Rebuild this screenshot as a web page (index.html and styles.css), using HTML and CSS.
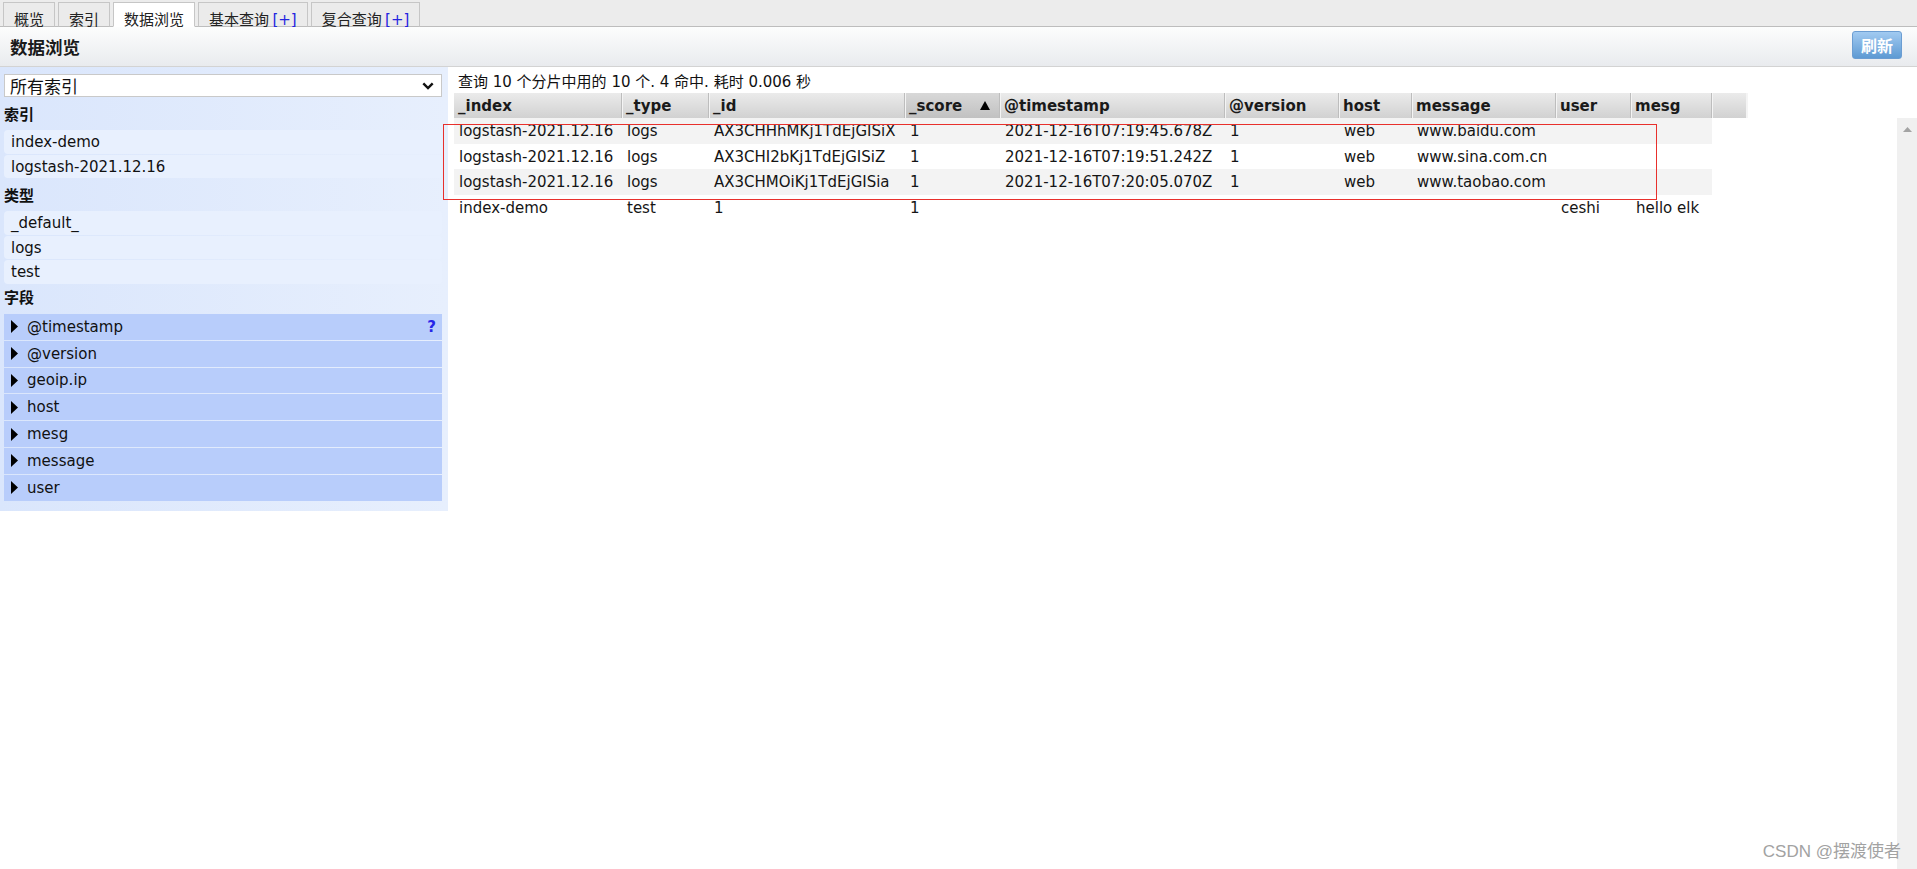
FILE: index.html
```html
<!DOCTYPE html>
<html lang="zh">
<head>
<meta charset="utf-8">
<title>数据浏览</title>
<link rel="stylesheet" href="styles.css">
</head>
<body>
<nav class="tabs">
  <div class="tab">概览</div>
  <div class="tab">索引</div>
  <div class="tab active">数据浏览</div>
  <div class="tab">基本查询 <span class="plus">[+]</span></div>
  <div class="tab">复合查询 <span class="plus">[+]</span></div>
</nav>
<header class="header">
  <h1 class="title">数据浏览</h1>
  <button class="refresh">刷新</button>
</header>
<div class="main">
  <aside class="sidebar">
    <div class="select">
      <span>所有索引</span>
      <svg class="chev" width="12" height="8" viewBox="0 0 12 8"><path d="M1.3 1.3 L6 6 L10.7 1.3" fill="none" stroke="#111" stroke-width="2.4"/></svg>
    </div>
    <div class="sec-title">索引</div>
    <div class="list">
      <div class="item">index-demo</div>
      <div class="item">logstash-2021.12.16</div>
    </div>
    <div class="sec-title">类型</div>
    <div class="list">
      <div class="item">_default_</div>
      <div class="item">logs</div>
      <div class="item">test</div>
    </div>
    <div class="sec-title fields-title">字段</div>
    <div class="fields">
      <div class="field"><svg class="tri" width="7" height="13" viewBox="0 0 7 13"><path d="M0 0 L7 6.5 L0 13 Z" fill="#000"/></svg><span class="fname">@timestamp</span><span class="help">?</span></div>
      <div class="field"><svg class="tri" width="7" height="13" viewBox="0 0 7 13"><path d="M0 0 L7 6.5 L0 13 Z" fill="#000"/></svg><span class="fname">@version</span></div>
      <div class="field"><svg class="tri" width="7" height="13" viewBox="0 0 7 13"><path d="M0 0 L7 6.5 L0 13 Z" fill="#000"/></svg><span class="fname">geoip.ip</span></div>
      <div class="field"><svg class="tri" width="7" height="13" viewBox="0 0 7 13"><path d="M0 0 L7 6.5 L0 13 Z" fill="#000"/></svg><span class="fname">host</span></div>
      <div class="field"><svg class="tri" width="7" height="13" viewBox="0 0 7 13"><path d="M0 0 L7 6.5 L0 13 Z" fill="#000"/></svg><span class="fname">mesg</span></div>
      <div class="field"><svg class="tri" width="7" height="13" viewBox="0 0 7 13"><path d="M0 0 L7 6.5 L0 13 Z" fill="#000"/></svg><span class="fname">message</span></div>
      <div class="field"><svg class="tri" width="7" height="13" viewBox="0 0 7 13"><path d="M0 0 L7 6.5 L0 13 Z" fill="#000"/></svg><span class="fname">user</span></div>
    </div>
  </aside>
  <section class="content">
    <div class="info">查询 10 个分片中用的 10 个. 4 命中. 耗时 0.006 秒</div>
    <table class="grid head">
      <colgroup>
        <col class="c-index"><col class="c-type"><col class="c-id"><col class="c-score"><col class="c-ts"><col class="c-ver"><col class="c-host"><col class="c-msg"><col class="c-user"><col class="c-mesg"><col class="c-pad">
      </colgroup>
      <thead>
        <tr>
          <th>_index</th><th>_type</th><th>_id</th>
          <th class="sorted"><span class="th-flex">_score<svg class="sort" width="10" height="9" viewBox="0 0 10 9"><path d="M5 0 L10 9 L0 9 Z" fill="#000"/></svg></span></th>
          <th>@timestamp</th><th>@version</th><th>host</th><th>message</th><th>user</th><th>mesg</th><th class="pad"></th>
        </tr>
      </thead>
    </table>
    <div class="body-wrap">
      <div class="body-scroll">
        <table class="grid body">
          <colgroup>
            <col class="c-index"><col class="c-type"><col class="c-id"><col class="c-score"><col class="c-ts"><col class="c-ver"><col class="c-host"><col class="c-msg"><col class="c-user"><col class="c-mesg">
          </colgroup>
          <tbody>
            <tr><td>logstash-2021.12.16</td><td>logs</td><td>AX3CHHhMKj1TdEjGISiX</td><td>1</td><td>2021-12-16T07:19:45.678Z</td><td>1</td><td>web</td><td>www.baidu.com</td><td></td><td></td></tr>
            <tr><td>logstash-2021.12.16</td><td>logs</td><td>AX3CHI2bKj1TdEjGISiZ</td><td>1</td><td>2021-12-16T07:19:51.242Z</td><td>1</td><td>web</td><td>www.sina.com.cn</td><td></td><td></td></tr>
            <tr><td>logstash-2021.12.16</td><td>logs</td><td>AX3CHMOiKj1TdEjGISia</td><td>1</td><td>2021-12-16T07:20:05.070Z</td><td>1</td><td>web</td><td>www.taobao.com</td><td></td><td></td></tr>
            <tr><td>index-demo</td><td>test</td><td>1</td><td>1</td><td></td><td></td><td></td><td></td><td>ceshi</td><td>hello elk</td></tr>
          </tbody>
        </table>
      </div>
      <div class="vscroll">
        <svg class="up" width="9" height="5" viewBox="0 0 9 5"><path d="M4.5 0 L9 5 L0 5 Z" fill="#a3a3a3"/></svg>
      </div>
    </div>
  </section>
</div>
<div class="annot"></div>
<div class="watermark">CSDN @摆渡使者</div>
</body>
</html>
```

FILE: styles.css
```css
* { box-sizing: border-box; }

html, body {
  margin: 0;
  padding: 0;
}

body {
  position: relative;
  height: 869px;
  overflow: hidden;
  display: flex;
  flex-direction: column;
  font-family: "DejaVu Sans", "Noto Sans CJK SC", sans-serif;
  color: #1b1b1b;
  background: #fff;
}

/* tabs */
.tabs {
  height: 27px;
  flex: none;
  display: flex;
  align-items: flex-end;
  gap: 3px;
  padding-left: 3px;
  background: #ececec;
  border-bottom: 1px solid #bdbdbd;
}

.tab {
  height: 25px;
  margin-bottom: -1px;
  padding: 7px 10px 0;
  font-size: 15px;
  line-height: 18px;
  color: #222;
  background: #ebebeb;
  border: 1px solid #c6c6c6;
  border-bottom: 1px solid #bdbdbd;
  white-space: nowrap;
  font-family: "Noto Sans CJK SC", "DejaVu Sans", sans-serif;
}

.tab.active {
  background: #fff;
  border-bottom-color: #fff;
}

.plus {
  color: #2424e0;
  font-family: "DejaVu Sans", sans-serif;
  font-size: 15px;
}

/* header */
.header {
  height: 40px;
  flex: none;
  display: flex;
  align-items: center;
  justify-content: space-between;
  background: linear-gradient(#fcfdfd, #e9ebee);
  border-bottom: 1px solid #d3d3d3;
}

.title {
  margin: 0 0 0 10px;
  font-size: 17.5px;
  font-weight: bold;
  color: #1a1a1a;
  font-family: "Noto Sans CJK SC", sans-serif;
}

.refresh {
  align-self: flex-start;
  margin: 4px 15px 0 0;
  width: 50px;
  height: 28px;
  padding: 0;
  border: 1px solid #6b9dd2;
  border-radius: 3px;
  background: linear-gradient(#a1caf1, #5e9ad3);
  color: #fff;
  font-size: 16px;
  font-weight: bold;
  font-family: "Noto Sans CJK SC", sans-serif;
  line-height: 26px;
}

/* main */
.main {
  flex: 1;
  display: flex;
  min-height: 0;
}

.sidebar {
  width: 448px;
  flex: none;
  align-self: flex-start;
  padding: 7px 6px 10.5px 4px;
  background: linear-gradient(to right, #dae6fc, #e7effd);
  font-size: 15px;
}

.select {
  height: 23px;
  display: flex;
  align-items: center;
  justify-content: space-between;
  padding: 0 7px 0 5px;
  background: #fff;
  border: 1px solid #c9c9c9;
  font-size: 17px;
  font-family: "Noto Sans CJK SC", sans-serif;
  color: #111;
}

.sec-title {
  padding: 6px 0;
  line-height: 21px;
  font-weight: bold;
  font-size: 15px;
  color: #111;
  font-family: "Noto Sans CJK SC", sans-serif;
}

.sec-title.fields-title {
  padding: 2px 0 7.5px;
}

.list {
  display: flex;
  flex-direction: column;
  gap: 1px;
}

.item {
  height: 23.5px;
  line-height: 24px;
  padding-left: 7px;
  background: #e8f0fe;
  border-radius: 4px;
  color: #111;
}

.fields {
  display: flex;
  flex-direction: column;
  gap: 1px;
}

.field {
  height: 25.8px;
  display: flex;
  align-items: center;
  padding: 0 6px 0 7px;
  background: #b8cdfb;
  color: #111;
}

.tri {
  flex: none;
  margin-right: 9px;
}

.fname {
  flex: 1;
}

.help {
  color: #2525e8;
  font-weight: bold;
}

/* content */
.content {
  flex: 1;
  min-width: 0;
  display: flex;
  flex-direction: column;
  padding: 4px 0 0 6px;
  font-size: 15px;
}

.info {
  height: 22px;
  line-height: 22px;
  padding-left: 4px;
  color: #111;
}

.grid {
  border-collapse: separate;
  border-spacing: 0;
  table-layout: fixed;
}

.grid.head { width: 1294px; }
.grid.body { width: 1258px; }

.c-index { width: 168px; }
.c-type  { width: 87px; }
.c-id    { width: 196px; }
.c-score { width: 95px; }
.c-ts    { width: 225px; }
.c-ver   { width: 114px; }
.c-host  { width: 73px; }
.c-msg   { width: 144px; }
.c-user  { width: 75px; }
.c-mesg  { width: 81px; }
.c-pad   { width: 36px; }

.grid th {
  height: 25px;
  padding: 0 4px;
  text-align: left;
  font-weight: bold;
  color: #1a1a1a;
  white-space: nowrap;
  background: linear-gradient(#ebebeb, #d1d1d1);
  border-right: 1px solid #bdbdbd;
  box-shadow: inset 1px 0 0 #f4f4f4;
}

.grid th:first-child {
  box-shadow: none;
}

.grid th.sorted {
  background: linear-gradient(#d8d8d8, #c1c1c1);
}

.grid th.pad {
  border-right: 2px solid #f4f4f4;
}

.th-flex {
  display: flex;
  align-items: center;
  justify-content: space-between;
  padding-right: 5px;
}

.body-wrap {
  flex: 1;
  min-height: 0;
  display: flex;
}

.body-scroll {
  flex: 1;
  min-width: 0;
}

.grid td {
  height: 25.7px;
  padding: 0 5px;
  white-space: nowrap;
  overflow: hidden;
  color: #151515;
}

.grid.body tr:nth-child(odd) td {
  background: #f3f3f3;
}

.vscroll {
  width: 20px;
  flex: none;
  background: #f0f0f0;
  display: flex;
  justify-content: center;
  padding-top: 9px;
}

.up { display: block; }

/* annotation rectangle drawn over the table */
.annot {
  position: absolute;
  left: 443px;
  top: 124px;
  width: 1214px;
  height: 76px;
  border: 1px solid #e8302c;
  pointer-events: none;
}

.watermark {
  position: absolute;
  right: 16px;
  bottom: 7px;
  font-family: "Liberation Sans", "Noto Sans CJK SC", sans-serif;
  font-size: 17px;
  line-height: 20px;
  color: #a2a2a2;
  text-shadow: 0 0 1px #fff;
}
```
